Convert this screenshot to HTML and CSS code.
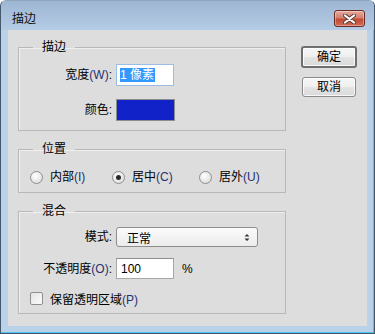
FILE: index.html
```html
<!DOCTYPE html>
<html>
<head>
  <title>描边</title>
  <link rel="stylesheet" href="styles.css">
</head>
<body>
  <div class="window">
    <div class="titlebar">
      <span class="title">描边</span>
      <button class="close" title="关闭">
        <svg width="13" height="10" viewBox="0 0 13 10">
          <path d="M2 1.5 L11 8.5 M11 1.5 L2 8.5" stroke="#5b3b36" stroke-width="4" stroke-linecap="round"/>
          <path d="M2 1.5 L11 8.5 M11 1.5 L2 8.5" stroke="#fff" stroke-width="2.2" stroke-linecap="round"/>
        </svg>
      </button>
    </div>

    <div class="frame">
      <div class="client">
        <div class="groups">
          <!-- 描边 -->
          <fieldset class="group g-stroke">
            <legend>描边</legend>
            <div class="row r-width">
              <span class="lbl">宽度<span class="key">(W)</span>:</span>
              <div class="field focus"><span class="sel">1 像素</span></div>
            </div>
            <div class="row r-color">
              <span class="lbl">颜色:</span>
              <div class="swatch"></div>
            </div>
          </fieldset>

          <!-- 位置 -->
          <fieldset class="group g-pos">
            <legend>位置</legend>
            <div class="radios">
              <label class="opt"><span class="radio"></span>内部<span class="key">(I)</span></label>
              <label class="opt"><span class="radio on"></span>居中<span class="key">(C)</span></label>
              <label class="opt"><span class="radio"></span>居外<span class="key">(U)</span></label>
            </div>
          </fieldset>

          <!-- 混合 -->
          <fieldset class="group g-blend">
            <legend>混合</legend>
            <div class="row r-mode">
              <span class="lbl">模式:</span>
              <div class="select">
                <span>正常</span>
                <svg width="6" height="9" viewBox="0 0 6 9">
                  <path d="M0.5 3.5 L3 1 L5.5 3.5 Z M0.5 5.5 L3 8 L5.5 5.5 Z" fill="#333"/>
                </svg>
              </div>
            </div>
            <div class="row r-opacity">
              <span class="lbl">不透明度<span class="key">(O)</span>:</span>
              <div class="field">100</div>
              <span class="unit">%</span>
            </div>
            <div class="row r-check">
              <span class="check"></span>
              <span>保留透明区域<span class="key">(P)</span></span>
            </div>
          </fieldset>
        </div>

        <div class="buttons">
          <button class="btn default">确定</button>
          <button class="btn">取消</button>
        </div>
      </div>
    </div>
  </div>
</body>
</html>
```

FILE: styles.css
```css
/* Photoshop 描边 dialog, Windows 7 look */
body {
  margin: 0;
  background: #fff;
  font-family: "Liberation Sans", "Noto Sans CJK SC", sans-serif;
  font-size: 12px;
  color: #000;
}

.window {
  width: 375px;
  height: 334px;
  box-sizing: border-box;
  display: flex;
  flex-direction: column;
  border: 1px solid #44576b;
  border-top-color: #8fa4ba;
  border-radius: 6px 6px 0 0;
  background: #bad1ea;
  box-shadow: inset -1px -1px 0 #49c6ec;
  overflow: hidden;
}

.titlebar {
  height: 29px;
  flex: none;
  display: flex;
  align-items: flex-start;
  padding: 0 9px 0 11px;
  background: linear-gradient(#9db6d2, #b5cce6);
}

.title {
  margin-top: 11px;
  line-height: 14px;
  color: #111;
}

.close {
  margin: 9px 0 0 auto;
  width: 31px;
  height: 17px;
  padding: 0;
  display: flex;
  align-items: center;
  justify-content: center;
  border: 1px solid #6b2a24;
  border-radius: 3px;
  background: linear-gradient(#e7aa9d 0%, #d3806f 45%, #c24b35 55%, #cf6a55 100%);
  box-shadow: inset 0 0 0 1px rgba(255, 255, 255, 0.35);
}

.frame {
  flex: 1;
  display: flex;
  padding: 0 7px 7px;
}

.client {
  flex: 1;
  display: flex;
  background: #dddddd;
  padding-left: 10px;
}

.groups {
  width: 268px;
  margin-top: 10px;
}

.group {
  margin: 0;
  padding: 0 0 0 11px;
  min-width: 0;
  border: 1px solid #b8b8b8;
  box-shadow: inset 1px 1px 0 #efefef;
}

.group legend {
  margin-left: 3px;
  padding: 0 9px;
  line-height: 14px;
}

.g-pos, .g-blend {
  margin-top: 11px;
}

.g-stroke { padding-bottom: 9px; }
.g-pos { padding-bottom: 4px; }
.g-blend { padding-bottom: 5px; }

.row {
  display: flex;
  align-items: center;
}

.lbl {
  width: 82px;
  margin-right: 4px;
  text-align: right;
  line-height: 14px;
}

.key {
  color: #263070;
}

.r-width { margin-top: 10px; height: 22px; }
.r-color { margin-top: 13px; height: 22px; }
.r-mode { margin-top: 9px; height: 20px; }
.r-opacity { margin-top: 11px; height: 21px; }
.r-check { margin-top: 9px; height: 20px; }

.field {
  box-sizing: border-box;
  width: 58px;
  height: 21px;
  padding-left: 4px;
  display: flex;
  align-items: center;
  background: #fff;
  border: 1px solid #a6a6a6;
  border-top-color: #8e8e8e;
}

.field.focus {
  height: 22px;
  padding-left: 3px;
  border: 1px solid #98bde6;
}

.sel {
  background: #3399ff;
  color: #fff;
  line-height: 14px;
  padding-right: 1px;
}

.swatch {
  box-sizing: border-box;
  width: 59px;
  height: 22px;
  background: #1122c9;
  border: 1px solid #8d8d8d;
}

.select {
  box-sizing: border-box;
  width: 142px;
  height: 20px;
  display: flex;
  align-items: center;
  justify-content: space-between;
  padding: 0 7px 0 10px;
  border: 1px solid #8e8e8e;
  border-radius: 3px;
  background: linear-gradient(#fbfbfb, #ececec);
}

.unit {
  margin-left: 8px;
}

.radios {
  margin-top: 10px;
  height: 22px;
  display: grid;
  grid-template-columns: 82px 87px auto;
  align-items: center;
}

.opt {
  display: flex;
  align-items: center;
  line-height: 14px;
}

.radio {
  box-sizing: border-box;
  width: 13px;
  height: 13px;
  margin-right: 7px;
  border-radius: 50%;
  border: 1px solid #8f8f8f;
  background: radial-gradient(circle at 40% 35%, #ffffff, #e2e2e2 70%, #cfcfcf);
  display: flex;
  align-items: center;
  justify-content: center;
}

.radio.on::after {
  content: "";
  width: 5px;
  height: 5px;
  border-radius: 50%;
  background: #2b2b2b;
}

.check {
  box-sizing: border-box;
  width: 13px;
  height: 13px;
  margin-right: 7px;
  border: 1px solid #8f8f8f;
  border-radius: 2px;
  background: linear-gradient(135deg, #e4e4e4, #fbfbfb);
}

.buttons {
  display: flex;
  flex-direction: column;
  align-items: flex-start;
  margin: 16px 0 0 15px;
}

.btn {
  box-sizing: border-box;
  width: 54px;
  height: 20px;
  margin: 9px 0 0 1px;
  padding: 0;
  font: inherit;
  line-height: 14px;
  color: #000;
  border: 1px solid #8a8a8a;
  border-radius: 3px;
  background: linear-gradient(#f7f7f7 0%, #efefef 50%, #e3e3e3 51%, #dadada 100%);
  box-shadow: inset 0 0 0 1px rgba(255, 255, 255, 0.8);
}

.btn.default {
  width: 56px;
  height: 22px;
  margin: 0;
  border: 2px solid #6f6f6f;
}
```
